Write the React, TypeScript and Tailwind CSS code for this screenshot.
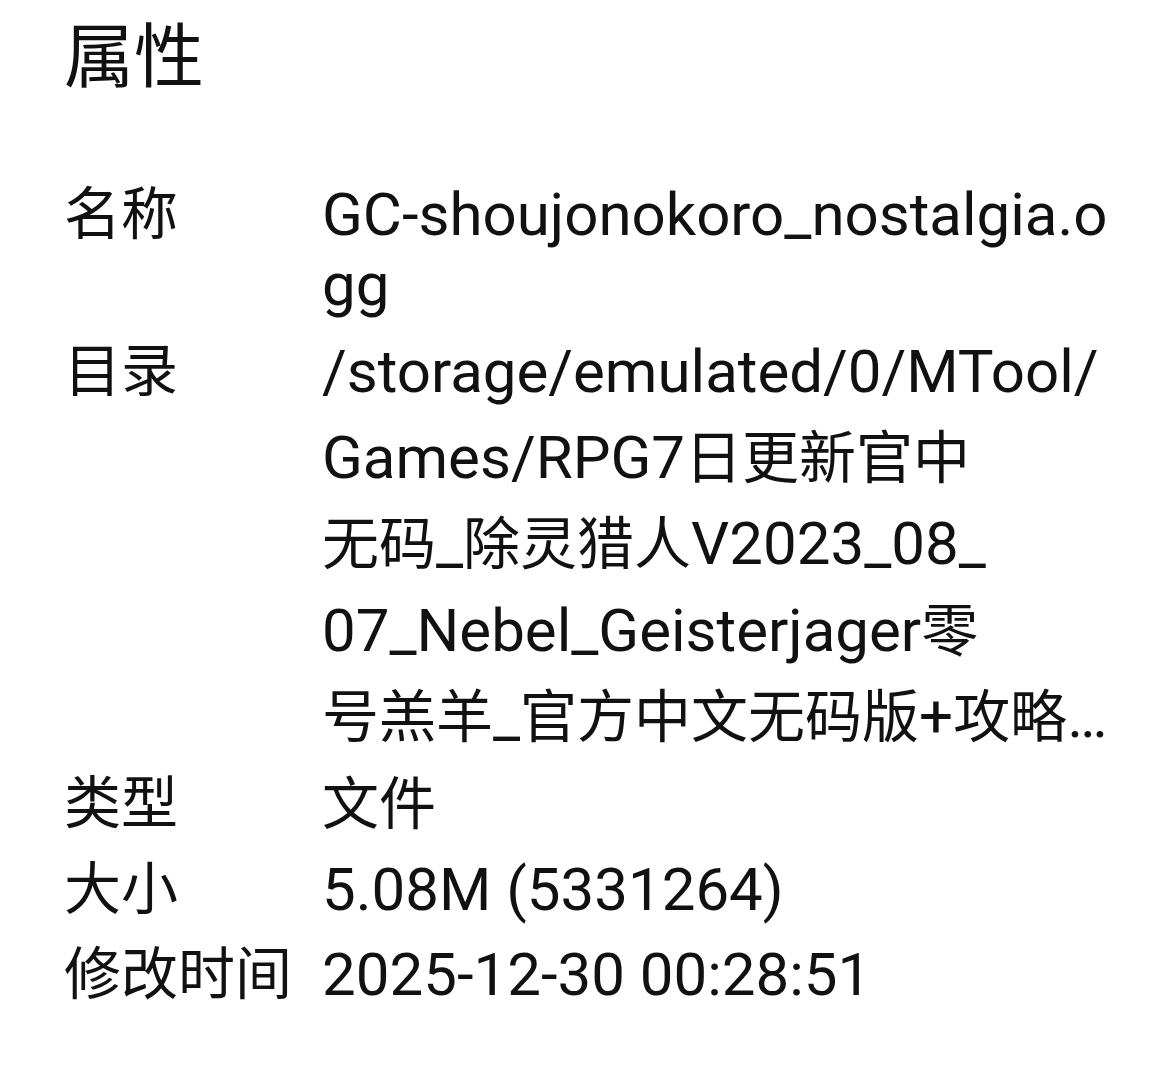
import React from "react";

interface Row {
  label: string;
  lines: string[];
}

const nameRow: Row = {
  label: "名称",
  lines: ["GC-shoujonokoro_nostalgia.o", "gg"],
};

const pathRow: Row = {
  label: "目录",
  lines: [
    "/storage/emulated/0/MTool/",
    "Games/RPG7日更新官中",
    "无码_除灵猎人V2023_08_",
    "07_Nebel_Geisterjager零",
    "号羔羊_官方中文无码版+攻略…",
  ],
};

const shortRows: Row[] = [
  { label: "类型", lines: ["文件"] },
  { label: "大小", lines: ["5.08M (5331264)"] },
  { label: "修改时间", lines: ["2025-12-30 00:28:51"] },
];

const CJK = /([\u3400-\u9fff]+)/;

// the CJK glyphs run a touch smaller than the latin ones on this device
function Mixed({ text }: { text: string }) {
  return (
    <>
      {text.split(CJK).map((part, i) =>
        CJK.test(part) ? (
          <span key={i} className="text-[57px]">
            {part}
          </span>
        ) : (
          <React.Fragment key={i}>{part}</React.Fragment>
        )
      )}
    </>
  );
}

function Lines({ lines }: { lines: string[] }) {
  return (
    <>
      {lines.map((line, i) => (
        <div key={i} className="whitespace-nowrap">
          <Mixed text={line} />
        </div>
      ))}
    </>
  );
}

export default function App() {
  return (
    <div className="min-h-screen bg-white text-[#111] font-['Roboto','Noto_Sans_CJK_SC',sans-serif]">
      <div className="pl-[64px] pr-[40px] pt-[8px]">
        <h1 className="text-[70px] leading-[100px] font-normal">属性</h1>

        <dl className="mt-[72px] grid grid-cols-[258px_1fr] text-[60px]">
          <dt className="text-[57px] leading-[70px]">{nameRow.label}</dt>
          <dd className="leading-[70px]">
            <Lines lines={nameRow.lines} />
          </dd>

          <dt className="mt-[9px] text-[57px] leading-[85.5px]">{pathRow.label}</dt>
          <dd className="mt-[9px] leading-[85.5px]">
            <Lines lines={pathRow.lines} />
          </dd>

          {shortRows.map((row) => (
            <React.Fragment key={row.label}>
              <dt className="text-[57px] leading-[85px] whitespace-nowrap">{row.label}</dt>
              <dd className="leading-[85px]">
                <Lines lines={row.lines} />
              </dd>
            </React.Fragment>
          ))}
        </dl>
      </div>
    </div>
  );
}
